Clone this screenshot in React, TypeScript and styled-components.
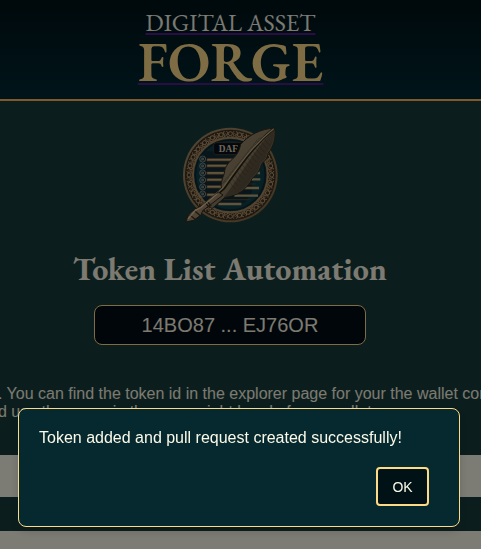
import React from "react";
import styled, { createGlobalStyle } from "styled-components";

const sans = `"Liberation Sans", Arial, sans-serif`;
const serif = `"EB Garamond", "Liberation Serif", serif`;

const GlobalStyle = createGlobalStyle`
  * { box-sizing: border-box; }
  html { background: #163c3a; }
  body { margin: 0; color: #f8f4e3; font: 16px/18px ${sans}; }
`;

const Page = styled.div`
  height: 100vh;
  overflow: hidden;
  background: #163c3a;
`;

const Header = styled.header`
  display: flex;
  justify-content: center;
  padding: 8px 20px 11px 0;
  background: linear-gradient(#001218, #002a34);
  border-bottom: 2px solid #ffb060;
`;

const Brand = styled.a`
  display: flex;
  flex-direction: column;
  align-items: center;
  font-family: ${serif};
  text-decoration: none;
`;

const BrandWord = styled.span<{ $large?: boolean }>`
  color: ${(p) => (p.$large ? "#fdd888" : "#f8f4e3")};
  font-size: ${(p) => (p.$large ? 56 : 24)}px;
  font-weight: ${(p) => (p.$large ? 600 : 400)};
  line-height: ${(p) => (p.$large ? 48 : 30)}px;
  padding-bottom: ${(p) => (p.$large ? 2 : 0)}px;
  text-decoration: underline 2px #551a8b;
  text-underline-offset: 2px;
  text-decoration-skip-ink: none;
`;

const Main = styled.main`
  display: flex;
  flex-direction: column;
  align-items: center;
  padding-top: 14px;
`;

const Intro = styled.section`
  display: flex;
  flex-direction: column;
  align-items: center;
  width: 100%;
  padding-right: 21px;
`;

const Emblem = styled.svg`
  width: 120px;
  height: 120px;
`;

const Title = styled.h1`
  margin: 14px 0 0;
  font: 700 32px/40px ${serif};
`;

const Wallet = styled.button`
  width: 272px;
  max-width: 90%;
  height: 40px;
  margin-top: 16px;
  color: #f8f4e3;
  background: #000c12;
  border: 1px solid #fdd888;
  border-radius: 8px;
  font: 20px/24px ${sans};
`;

const Help = styled.p`
  width: calc(100% + 4px);
  margin: 40px 0 34px;
  white-space: nowrap;
`;

const Line = styled.span`
  display: block;
`;

const Form = styled.form`
  display: flex;
  flex-direction: column;
  gap: 34px;
  width: 100%;
`;

const Field = styled.input`
  width: 100%;
  height: 42px;
  padding: 0 12px;
  background: #fbf9e8;
  border: 0;
  border-radius: 0;
`;

const Overlay = styled.div`
  position: fixed;
  inset: 0;
  display: flex;
  align-items: flex-end;
  padding: 0 21px 22px 18px;
  background: rgba(0, 0, 0, 0.5);
`;

const Dialog = styled.div`
  display: flex;
  flex-direction: column;
  width: 100%;
  padding: 20px 30px 20px 20px;
  color: #fbf9e8;
  background: #06292f;
  border: 1px solid #fdda85;
  border-radius: 8px;
  box-shadow: 0 4px 10px rgba(0, 0, 0, 0.15);
`;

const Message = styled.p`
  margin: 0;
`;

const Confirm = styled.button`
  align-self: flex-end;
  width: 53px;
  height: 39px;
  margin-top: 20px;
  padding: 0;
  color: #fbf9e8;
  background: #001215;
  border: 2px solid #fdda85;
  border-radius: 4px;
  font: 14px/18px ${sans};
`;

const rows = [
  [110, 82, 130], [110, 88, 148], [110, 78, 170], [110, 64, 190],
  [110, 60, 211], [110, 34, 235],
];

function Logo() {
  return (
    <Emblem viewBox="0 0 360 360" role="img" aria-label="Digital Asset Forge emblem">
      <defs>
        <linearGradient id="feather" x1="0" y1="0" x2="1" y2="1">
          <stop offset="0" stopColor="#a89a7c" />
          <stop offset=".5" stopColor="#8c7d60" />
          <stop offset="1" stopColor="#5b503b" />
        </linearGradient>
        <linearGradient id="metal" x1="0" y1="0" x2="1" y2="1">
          <stop offset="0" stopColor="#a68e6a" />
          <stop offset="1" stopColor="#86683f" />
        </linearGradient>
      </defs>
      <circle cx="181" cy="180" r="142" fill="url(#metal)" />
      <circle cx="181" cy="180" r="136" fill="#3a3023" />
      <g fill="none" stroke="#b8966a" strokeWidth="3">
        {Array.from({ length: 28 }, (_, i) => (
          <g key={i} transform={`rotate(${(i * 360) / 28} 181 180)`}>
            <circle cx="181" cy="56" r="6" />
            <path d="M169 49q8 2 3 9t7 8M193 49q-8 2-3 9t-7 8" />
            <path d="M164 55l6 3-4 7" strokeWidth="2" />
          </g>
        ))}
      </g>
      <circle cx="181" cy="180" r="112" fill="#0c414d" stroke="#a88a60" strokeWidth="6" />
      <circle cx="181" cy="180" r="105" fill="none" stroke="#14252b" strokeWidth="5" />
      <path d="M108 109h128l13 19-3 104-22 31H113l-18-16v-122z" fill="#102c36" />
      <path d="M137 83h76l5 6v24l-5 6h-76l-6-6V89z" fill="#080f16" stroke="#403d38" strokeWidth="3" />
      <text x="146" y="111" fill="#dcd2bc" fontFamily="Liberation Serif" fontSize="28" fontWeight="700">DAF</text>
      {rows.map(([x, w, y], i) => (
        <g key={y}>
          <rect x={x} y={y} width={w} height="9" rx="2" fill="#b69a6c" stroke="#392c20" strokeWidth="2" />
          <path d={`M${x + 3} ${y + 3}h${w - 6}`} stroke="#d9bf8d" strokeWidth="2" />
          <g fill="none" stroke="#b5b2a6" strokeWidth="2">
            <circle cx="98" cy={132 + i * 21} r="9" />
            <circle cx="98" cy={132 + i * 21} r="3" />
            <path d={`M92 ${126 + i * 21}l12 12m0-12l-12 12`} strokeWidth="1" />
          </g>
        </g>
      ))}
      <g stroke="#c5a877" strokeWidth="7">
        <path d="M248 174h22M236 193h35M211 219h56M193 242h71M145 267h69" />
        <path d="M161 254h80M214 207h43" stroke="#51452f" strokeWidth="3" />
      </g>
      <path d="M314 39c-42 2-78 22-102 49-3 15-8 27-19 39-15 13-26 25-29 40 0 13-7 18-8 29-3 10-3 17-1 26l-8 12-34 34 13 13 39-34c28-4 50-14 66-33 6-10 12-12 14-22 21-17 26-33 30-46 12-8 18-20 19-31 16-20 25-48 20-76z" fill="url(#feather)" stroke="#302b22" strokeWidth="3" />
      <path d="M314 39c2 27-7 55-23 75-1 11-7 23-19 31-4 13-9 29-30 46-2 10-8 12-14 22-16 19-38 29-66 33C215 179 243 116 314 39z" fill="#40372a" opacity=".55" />
      <g fill="none" stroke="#2f2a20" strokeWidth="1">
        {Array.from({ length: 14 }, (_, i) => (
          <path key={i} d={`M${282 - i * 8} ${70 + i * 10}q-14-5-24 9M${282 - i * 8} ${70 + i * 10}q9 14 18 22`} />
        ))}
      </g>
      <path d="M312 40C251 91 214 147 161 221L65 302" fill="none" stroke="#282218" strokeWidth="8" />
      <path d="M311 41C249 90 211 145 158 219L65 300" fill="none" stroke="#c1ae86" strokeWidth="4" />
      <path d="M145 231L88 278l-13 3-19 18-9 22 24-5 22-16 5-13 61-47z" fill="#a1896a" stroke="#30261c" strokeWidth="3" />
      <path d="M106 264l13 14m-8-19l13 13M70 284l21 18m-32-3l16 14" stroke="#3c2d1f" strokeWidth="4" />
      <path d="M142 236l-49 41-17 9-22 26" fill="none" stroke="#dcc29c" strokeWidth="4" />
    </Emblem>
  );
}

export default function App() {
  return (
    <Page>
      <GlobalStyle />
      <Header>
        <Brand href="#">
          <BrandWord>DIGITAL ASSET</BrandWord>
          <BrandWord $large>FORGE</BrandWord>
        </Brand>
      </Header>
      <Main>
        <Intro>
          <Logo />
          <Title>Token List Automation</Title>
          <Wallet type="button">14BO87 ... EJ76OR</Wallet>
        </Intro>
        <Help>
          <Line>. You can find the token id in the explorer page for your the wallet con</Line>
          <Line>d use the menu in the upper right hand of your wallet.</Line>
        </Help>
        <Form>
          <Field aria-label="Token ID" />
          <Field aria-label="Token name" />
        </Form>
      </Main>
      <Overlay>
        <Dialog role="alertdialog" aria-modal="true" aria-labelledby="message">
          <Message id="message">Token added and pull request created successfully!</Message>
          <Confirm type="button">OK</Confirm>
        </Dialog>
      </Overlay>
    </Page>
  );
}
